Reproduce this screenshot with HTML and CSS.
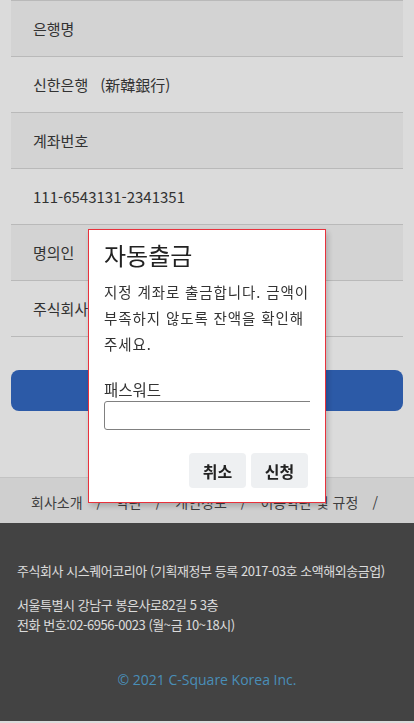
FILE: index.html
```html
<!DOCTYPE html>
<html lang="ko">
<head>
  <meta charset="UTF-8">
  <meta name="viewport" content="width=device-width, initial-scale=1.0">
  <title>자동출금</title>
  <link rel="stylesheet" href="styles.css">
</head>
<body>

<div class="page">
  <div class="info">
    <div class="row head">은행명</div>
    <div class="row">신한은행<span class="hanja">(新韓銀行)</span></div>
    <div class="row head">계좌번호</div>
    <div class="row">111-6543131-2341351</div>
    <div class="row head">명의인</div>
    <div class="row">주식회사 시스퀘어코리아</div>
  </div>
  <button class="submit">자동출금 신청</button>
</div>

<div class="links">
  <span>회사소개</span><span>/</span>
  <span>약관</span><span>/</span>
  <span>개인정보</span><span>/</span>
  <span>이용약관 및 규정</span><span>/</span>
</div>

<footer class="footer">
  <p>주식회사 시스퀘어코리아 (기획재정부 등록 2017-03호 소액해외송금업)</p>
  <p>서울특별시 강남구 봉은사로82길 5 3층<br>전화 번호:02-6956-0023 (월~금 10~18시)</p>
  <p class="copy">© 2021 C-Square Korea Inc.</p>
</footer>

<div class="overlay"></div>

<div class="dialog">
  <h2>자동출금</h2>
  <p>지정 계좌로 출금합니다. 금액이 부족하지 않도록 잔액을 확인해 주세요.</p>
  <label class="label" for="pw">패스워드</label>
  <div class="field">
    <input id="pw" type="password">
  </div>
  <div class="actions">
    <button class="btn">취소</button>
    <button class="btn">신청</button>
  </div>
</div>

</body>
</html>
```

FILE: styles.css
```css
body {
  margin: 0;
  font-family: "Noto Sans CJK KR", "Noto Sans", sans-serif;
  background: #fff;
  color: #3b3b3b;
}
.page {
  padding: 0 11px 66px;
}
.info {
  border-top: 1px solid #d8d8d8;
}
.row {
  padding: 17px 22px;
  line-height: 21px;
  font-size: 15px;
  border-bottom: 1px solid #d8d8d8;
  background: #fff;
}
.row.head {
  background: #f6f6f6;
}
.hanja {
  margin-left: 12px;
}
.submit {
  display: block;
  width: 100%;
  height: 41px;
  margin-top: 33px;
  border: 0;
  border-radius: 8px;
  background: #3469c3;
  color: #fff;
  font-family: inherit;
  font-size: 16px;
}
.links {
  display: flex;
  gap: 14px;
  padding: 0 31px;
  height: 46px;
  align-items: center;
  border-top: 1px solid #e4e4e4;
  background: #f2f2f2;
  font-size: 14px;
  line-height: 20px;
  padding-top: 3px;
  box-sizing: border-box;
  color: #4a4a4a;
  white-space: nowrap;
}
.footer {
  background: #4e4e4e;
  color: #fff;
  padding: 38px 17px 30px;
  height: 198px;
  box-sizing: border-box;
  font-size: 13px;
  line-height: 20px;
  letter-spacing: -0.45px;
}
.footer p {
  margin: 0 0 14px;
  white-space: nowrap;
}
.footer .copy {
  margin-top: 35px;
  text-align: center;
  font-family: "Open Sans", sans-serif;
  font-size: 14px;
  letter-spacing: 0;
  color: #56a6d6;
}
.overlay {
  position: fixed;
  inset: 0;
  background: rgba(0, 0, 0, 0.14);
}
.dialog {
  position: fixed;
  left: 88px;
  top: 229px;
  width: 206px;
  padding: 8px 15px 14px;
  background: #fff;
  border: 1px solid #e8323c;
  box-shadow: 2px 3px 6px rgba(0, 0, 0, 0.2);
  color: #222;
}
.dialog h2 {
  margin: 0;
  font-size: 24px;
  font-weight: 400;
  line-height: 34px;
}
.dialog p {
  margin: 7px 0 0;
  font-size: 14.5px;
  line-height: 26px;
  letter-spacing: 0.9px;
  word-break: keep-all;
  color: #333;
}
.label {
  display: block;
  margin-top: 21px;
  font-size: 15.5px;
  line-height: 22px;
  color: #333;
}
.field {
  overflow: hidden;
  margin-top: 1px;
}
.field input {
  display: block;
  width: 230px;
  height: 29px;
  box-sizing: border-box;
  border: 1px solid #808080;
  border-radius: 3px;
}
.actions {
  display: flex;
  justify-content: flex-end;
  gap: 5px;
  margin-top: 23px;
  padding-right: 2px;
}
.btn {
  width: 57px;
  height: 35px;
  border: 0;
  border-radius: 4px;
  background: #eef0f2;
  font-family: inherit;
  font-size: 16px;
  font-weight: 700;
  color: #222;
}
```
